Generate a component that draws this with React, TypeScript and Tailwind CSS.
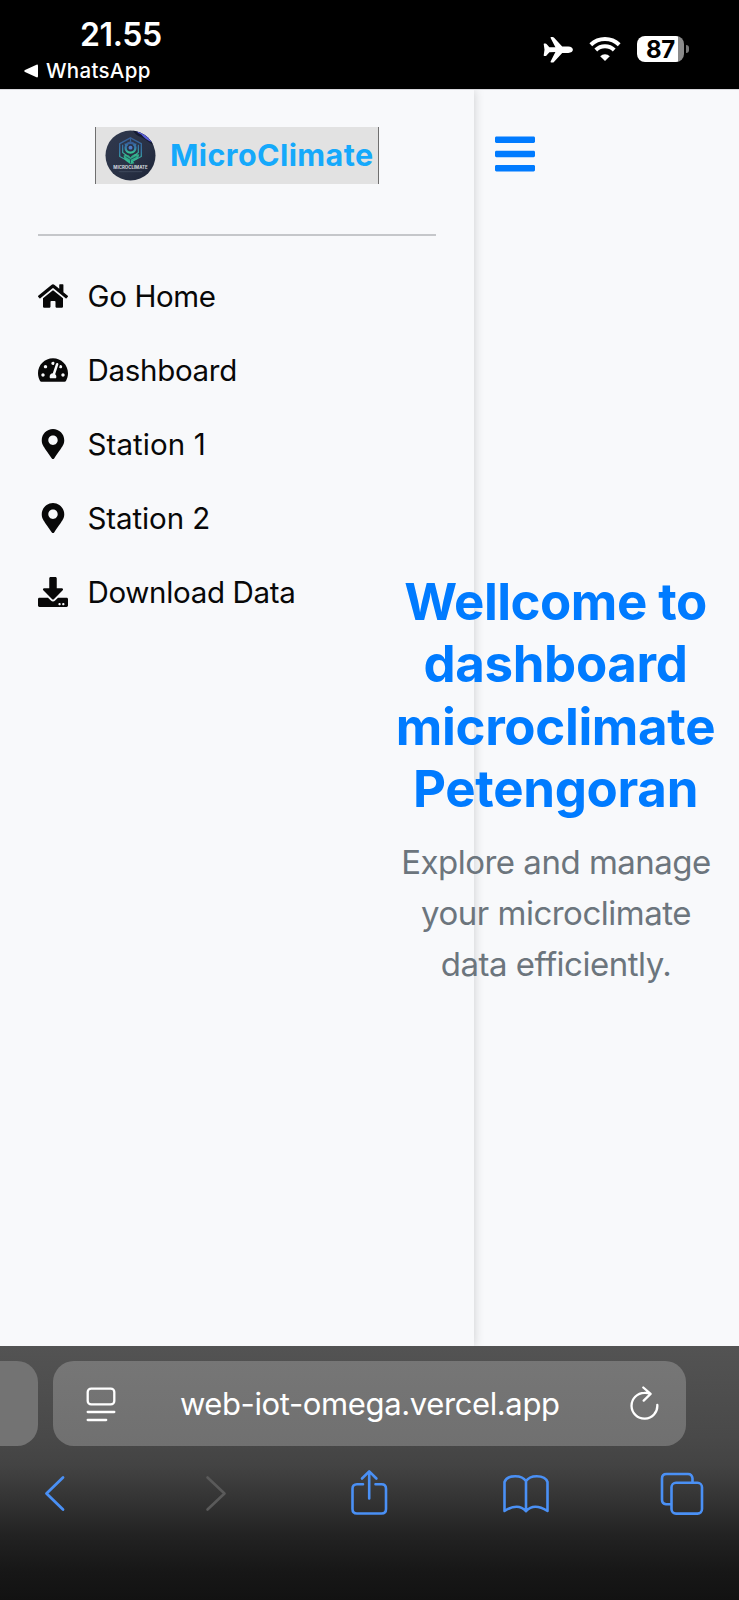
import { FaBars, FaDownload, FaHome, FaMapMarkerAlt, FaTachometerAlt } from "react-icons/fa";

const menu = [
  { label: "Go Home", Icon: FaHome, tracking: "tracking-[-0.35px]" },
  { label: "Dashboard", Icon: FaTachometerAlt, tracking: "tracking-[-0.3px]" },
  { label: "Station 1", Icon: FaMapMarkerAlt, tracking: "tracking-[0.1px]" },
  { label: "Station 2", Icon: FaMapMarkerAlt, tracking: "tracking-[-0.1px]" },
  { label: "Download Data", Icon: FaDownload, tracking: "tracking-[-0.33px]" },
];

function StatusBar() {
  return (
    <header className="flex h-[89px] justify-between bg-black text-white">
      <div className="flex flex-col pl-[24px] pt-[15px]">
        <div className="pl-[56px] text-[32px] font-semibold leading-[40px] tracking-[-0.4px]">21.55</div>
        <div className="flex items-center text-[20.5px] font-medium leading-[32px] tracking-[0.3px]">
          <svg className="mr-[8px] h-[14px] w-[14px]" viewBox="0 0 14 14" fill="currentColor">
            <path d="M1 6 12.5.7q1.500-.5 1.500 1v10.600q0 1.500-1.500 1L1 8Q-.5 7 1 6Z" />
          </svg>
          WhatsApp
        </div>
      </div>
      <div className="flex items-start pr-[50px] pt-[36px]">
        <svg className="h-[28px] w-[30px]" viewBox="0 0 30 28" fill="currentColor">
          <path d="M1.200 7.500h1.300q.6 0 1 .5l2.900 3.200 6 .1L7.600 1.900Q7.300.9 8.200.9h1.500q.7 0 1.200.6l8.300 9h6.100q4.400.4 4.600 3.200-.2 2.800-4.600 3.200h-6.100l-8.300 9q-.5.600-1.200.6H8.200q-.9 0-.6-1l4.800-9.400-6 .1-2.900 3.200q-.4.500-1 .5H1.200q-.5 0-.5-.6l.8-5.600L.7 8.100q0-.6.5-.6Z" />
        </svg>
        <svg className="ml-[16px] h-[28px] w-[32px]" viewBox="0 0 32 28" fill="none" stroke="currentColor">
          <path d="M1.800 8.700a20.500 20.500 0 0 1 28.400 0" strokeWidth="4" />
          <path d="M6.800 14a13.200 13.200 0 0 1 18.400 0" strokeWidth="4" />
          <path d="m16 25-4.800-4.800a6.900 6.900 0 0 1 9.600 0Z" fill="currentColor" stroke="none" />
        </svg>
        <div className="ml-[16px] flex h-[26px] w-[47px] items-center justify-center rounded-[8px] bg-[linear-gradient(to_right,#fff_41px,#8b8b8b_41px)] pt-[1px] text-[24px] font-bold leading-none tracking-[-0.3px] text-black">
          87
        </div>
        <div className="ml-[2px] mt-[9px] h-[8px] w-[3px] rounded-r-full bg-[#777]" />
      </div>
    </header>
  );
}

function Logo() {
  return (
    <div className="flex h-[57px] w-[284px] items-center border-x border-[#6f6f6f] bg-[#e2e2e2] pl-[9px]">
      <svg className="size-[51px] shrink-0" viewBox="0 0 52 52">
        <defs>
          <linearGradient id="disc" x1="0" y1="0" x2="1" y2="1">
            <stop offset="0" stopColor="#30394d" />
            <stop offset=".6" stopColor="#293145" />
            <stop offset="1" stopColor="#1b2336" />
          </linearGradient>
          <linearGradient id="hex" x1="0" y1="0" x2="0" y2="1">
            <stop offset="0" stopColor="#365c96" />
            <stop offset=".55" stopColor="#377fae" />
            <stop offset="1" stopColor="#35c392" />
          </linearGradient>
          <clipPath id="round">
            <circle cx="26" cy="26" r="25.500" />
          </clipPath>
        </defs>
        <g clipPath="url(#round)">
          <rect width="52" height="52" fill="url(#disc)" />
          <path d="M28 0q3 5 8 7t11 7l5 3V0Z" fill="#141b33" />
          <path d="M31 0q2 3 6 4.500 5 6 11 8l4 1V0Z" fill="#5a5fd8" />
        </g>
        <g fill="none" stroke="url(#hex)">
          <path d="m26 8 11 6v13l-11 6-11-6V14Z" strokeWidth="1.300" />
          <circle cx="26" cy="18" r="5" strokeWidth="2.400" />
          <path d="M18 15v8l4 3M34 15v8l-4 3M26 8v4M20 14l3 2M32 14l-3 2" strokeWidth="1.200" />
        </g>
        <circle cx="26" cy="18" r="2" fill="#4c7cc8" />
        <path d="M19 26q5-2 7 2 3-5 9-3-1 6-7 6l2 3-4 1-4-3q-3-2-3-6Z" fill="#35bf94" opacity=".85" />
        <path d="m21 27 5 3 6-3M26 30v4" fill="none" stroke="#1d4f5b" strokeWidth=".9" />
        <text x="26" y="39.500" textAnchor="middle" fill="#d3d7df" fontSize="4.300" fontWeight="700" textLength="35" lengthAdjust="spacingAndGlyphs">
          MICROCLIMATE
        </text>
        <path d="M14 42.500h24" stroke="#4a5468" strokeWidth=".7" />
      </svg>
      <span className="ml-[14px] pb-[1px] text-[30.5px] font-bold leading-none tracking-[0.4px] text-[#15a9fb]">MicroClimate</span>
    </div>
  );
}

function Sidebar() {
  return (
    <aside className="col-start-1 row-start-1 w-[474px] bg-[#f8f9fb] px-[38px] pt-[37px] shadow-[0_0_10px_rgba(0,0,0,0.18)]">
      <div className="flex justify-center">
        <Logo />
      </div>
      <div className="mt-[50px] h-[2px] bg-[#c5c7ca]" />
      <nav className="mt-[24px] flex flex-col">
        {menu.map(({ label, Icon, tracking }) => (
          <a key={label} className="flex h-[74px] items-center text-[29.5px] text-[#080808]">
            <Icon className="mb-[3px] w-[30px] shrink-0 text-[30px]" />
            <span className={`ml-[19.5px] whitespace-nowrap pb-[1px] ${tracking}`}>{label}</span>
          </a>
        ))}
      </nav>
    </aside>
  );
}

function Welcome() {
  return (
    <main className="z-10 col-start-1 row-start-1 flex flex-col">
      <FaBars className="ml-[495px] mt-[40.5px] h-[46px] w-[40px] text-[#007bff]" />
      <div className="ml-[372px] mt-[394px] flex flex-col items-center whitespace-nowrap">
        <h1 className="flex flex-col items-center text-[51px] font-bold leading-[62.500px] text-[#007bff]">
          <span className="tracking-[-0.5px]">Wellcome to</span>
          <span className="tracking-[-0.35px]">dashboard</span>
          <span className="tracking-[-0.35px]">microclimate</span>
          <span className="tracking-[-0.3px]">Petengoran</span>
        </h1>
        <p className="ml-[1px] mt-[16px] flex flex-col items-center text-[33px] leading-[51.300px] text-[#6c757d]">
          <span className="tracking-[-0.5px]">Explore and manage</span>
          <span className="tracking-[-0.5px]">your microclimate</span>
          <span className="tracking-[-0.5px]">data efficiently.</span>
        </p>
      </div>
    </main>
  );
}

function BrowserBar() {
  return (
    <footer className="h-[254px] bg-[linear-gradient(to_bottom,#535353_0px,#494949_90px,#434343_120px,#333_155px,#222_190px,#171717_225px,#121212_254px)] pt-[15px]">
      <div className="flex h-[85px]">
        <div className="w-[38px] rounded-r-[21px] bg-[#737373]" />
        <div className="ml-[15px] flex w-[632.5px] items-center rounded-[21px] bg-[linear-gradient(#767676,#707070)] pl-[33px] pr-[27px] text-white">
          <svg className="h-[36px] w-[30px]" viewBox="0 0 30 36" fill="none" stroke="currentColor" strokeWidth="2.300" strokeLinecap="round">
            <rect x="1.700" y="2.600" width="26.600" height="15.800" rx="3.500" />
            <path d="M1.700 26h26.600M1.700 34h18.500" />
          </svg>
          <span className="flex-1 pr-[5px] text-center text-[31px] leading-none tracking-[-0.38px]">web-iot-omega.vercel.app</span>
          <svg className="h-[36px] w-[30px]" viewBox="0 0 30 36" fill="none" stroke="currentColor" strokeWidth="2.300" strokeLinecap="round" strokeLinejoin="round">
            <path d="M28.300 19A12.900 12.900 0 1 1 15.400 6.900q3-.2 6 .8M14.300 1.500 21.600 7.900l-6.900 6.700" />
          </svg>
        </div>
      </div>
      <div className="flex pl-[43px] pt-[22px] text-[#4a90f5]">
        <svg className="h-[48px] w-[24px]" viewBox="0 0 24 48" fill="none" stroke="currentColor" strokeWidth="2.800" strokeLinecap="round" strokeLinejoin="round">
          <path d="M20 9.500 3.500 25.500 20 41.500" />
        </svg>
        <svg className="ml-[138px] h-[48px] w-[24px] text-[#5a5a5a]" viewBox="0 0 24 48" fill="none" stroke="currentColor" strokeWidth="2.600" strokeLinecap="round" strokeLinejoin="round">
          <path d="m2.500 9.500 17 16-17 16" />
        </svg>
        <svg className="ml-[121px] h-[48px] w-[38px]" viewBox="0 0 38 48" fill="none" stroke="currentColor" strokeWidth="2.600" strokeLinecap="round" strokeLinejoin="round">
          <path d="M13 16.200H7Q2.500 16.200 2.500 20.700V41q0 4.500 4.500 4.500h24.500Q36 45.500 36 41V20.700Q36 16.200 31.500 16.200h-6M19.200 30.500V4M12 10.500l7.200-7.200 7.200 7.200" />
        </svg>
        <svg className="ml-[114.5px] h-[48px] w-[46px]" viewBox="0 0 46 48" fill="none" stroke="currentColor" strokeWidth="2.600" strokeLinecap="round" strokeLinejoin="round">
          <path d="M23 43q-8-8.500-21.500 0V14q2-5.800 10.700-5.800Q20 8.200 23 13.200q3-5 10.800-5 8.700 0 10.700 5.800v29Q31 34.500 23 43ZM23 13.200v30" />
        </svg>
        <svg className="ml-[111px] h-[48px] w-[44px]" viewBox="0 0 44 48" fill="none" stroke="currentColor" strokeWidth="2.600" strokeLinejoin="round">
          <path d="M11 36.200H6q-4-.5-4-4.500V10.500Q2 6 6.500 6H28q4 0 4.500 4.500v4" />
          <rect x="11.500" y="14.800" width="30.500" height="30.800" rx="4.500" />
        </svg>
      </div>
    </footer>
  );
}

export default function App() {
  return (
    <div className="flex h-[1600px] w-[739px] flex-col overflow-hidden bg-[#f8f9fb] font-['Inter','Liberation_Sans',sans-serif]">
      <StatusBar />
      <div className="grid h-[1257px] grid-cols-1 grid-rows-1 overflow-hidden border-t border-[#d9d9dd]">
        <Sidebar />
        <Welcome />
      </div>
      <BrowserBar />
    </div>
  );
}
